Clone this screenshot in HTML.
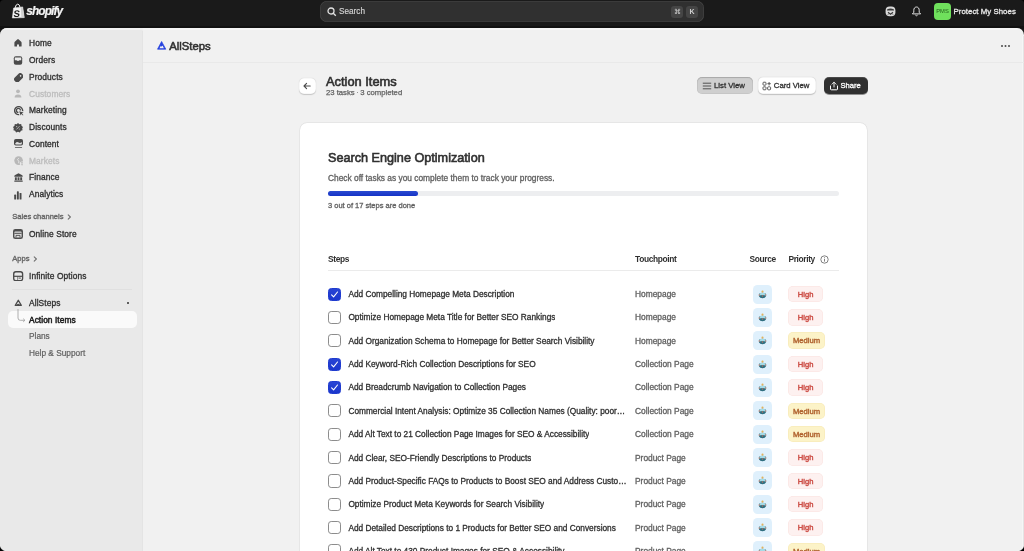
<!DOCTYPE html>
<html><head><meta charset="utf-8">
<style>*{box-sizing:border-box;margin:0;padding:0}
html,body{width:1024px;height:551px;overflow:hidden;background:#000;font-family:"Liberation Sans",sans-serif;color:#303030}
#root{position:absolute;left:0;top:0;width:1024px;height:551px;overflow:hidden;will-change:transform;background:#1a1a1a}
.abs{position:absolute}
#frame{position:absolute;left:0;top:28px;width:1024px;height:540px;background:#f1f1f1;border-radius:7px;overflow:hidden}
#side{position:absolute;left:0;top:0;width:142px;height:540px;background:#e9e9e9;box-shadow:0.5px 0 1px rgba(0,0,0,.05)}
.nav{position:absolute;left:29px;font-size:8.4px;color:#303030;-webkit-text-stroke:0.32px #303030;letter-spacing:0.1px;white-space:nowrap;line-height:10px}
.nav.dis{color:#bdbdbd;-webkit-text-stroke-color:#bdbdbd}
.nav.sub{color:#616161;font-size:8.3px;letter-spacing:0;-webkit-text-stroke:0.2px #616161}
.sec{position:absolute;left:12.3px;font-size:7.55px;color:#666;-webkit-text-stroke:0.35px #666;letter-spacing:0;white-space:nowrap;line-height:10px}
#card{position:absolute;background:#fff;border-radius:7px;box-shadow:0 0 0 0.7px rgba(0,0,0,.05),0 0.6px 1px rgba(0,0,0,.08)}
.cb{position:absolute;width:13.2px;height:13.2px;border-radius:3.2px;border:1.3px solid #8c8c8c;background:#fff}
.cb.on{background:linear-gradient(#2844d4,#1a36cc);border-color:#1f3bcf}
.rt{position:absolute;left:348.4px;font-size:8.3px;color:#303030;white-space:nowrap;line-height:10px;max-width:278.5px;overflow:hidden;text-overflow:ellipsis;-webkit-text-stroke:0.3px #303030}
.tp{position:absolute;left:635px;font-size:8.4px;color:#616161;white-space:nowrap;line-height:10px;-webkit-text-stroke:0.3px #616161}
.src{position:absolute;left:753px;width:19px;height:19px;border-radius:4px;background:#e0f0fc}
.bd{position:absolute;left:788px;height:16.5px;border-radius:5px;font-size:7.6px;line-height:18px;text-align:center;overflow:hidden}
.bd.h{width:35.3px;background:#fdf1f0;color:#cc4c44;-webkit-text-stroke:0.4px #cc4c44;box-shadow:inset 0 0 0 0.5px rgba(230,120,110,.12)}
.bd.m{width:37px;background:#fcf3c8;color:#b0622e;-webkit-text-stroke:0.4px #b0622e;box-shadow:inset 0 0 0 0.5px rgba(220,180,60,.15)}
.th{position:absolute;font-size:8.4px;font-weight:bold;letter-spacing:-0.35px;color:#303030;line-height:10px;white-space:nowrap}
</style></head><body><div id="root">
<!-- TOP BAR -->
<div class="abs" style="left:0;top:0;width:1024px;height:28px;background:#1a1a1a"></div><div class="abs" style="left:0;top:26px;width:1024px;height:3px;background:#121212"></div>
<!-- logo -->
<svg class="abs" style="left:11px;top:3px" width="15" height="16" viewBox="0 0 15 16"><path d="M1.3 15 L2.6 5 L11.7 3.9 L13.3 14.6 Z" fill="#f2f2f2" stroke="#f2f2f2" stroke-width="0.5" stroke-linejoin="round"/><path d="M9.8 4.1 L11.7 3.9 L13.3 14.6 L10.4 14.8 Z" fill="#cfcfcf"/><path d="M4 5.1 Q5 0.9 6.8 1.1 Q8.6 1.3 9 4.4" stroke="#f2f2f2" stroke-width="1" fill="none"/><text x="3.6" y="13.6" font-family="Liberation Sans" font-weight="bold" font-size="9.6" fill="#1a1a1a" transform="skewX(-6)">S</text></svg>
<div class="abs" style="left:26.3px;top:3.6px;font-size:11.9px;font-weight:bold;font-style:italic;color:#f4f4f4;letter-spacing:-0.9px;-webkit-text-stroke:0.2px #f4f4f4;line-height:14px">shopify</div>
<!-- search -->
<div class="abs" style="left:320px;top:1px;width:384px;height:21px;background:#303030;border-radius:7px;box-shadow:inset 0 0 0 0.6px #464646"></div>
<svg class="abs" style="left:327px;top:6.5px" width="10" height="10" viewBox="0 0 10 10"><circle cx="4" cy="4" r="3" stroke="#e3e3e3" stroke-width="1.3" fill="none"/><path d="M6.3 6.3 L8.8 8.8" stroke="#e3e3e3" stroke-width="1.3"/></svg>
<div class="abs" style="left:339px;top:6.5px;font-size:8.2px;color:#d4d4d4;line-height:10px;-webkit-text-stroke:0.15px #d4d4d4">Search</div>
<div class="abs" style="left:671px;top:5.7px;width:12px;height:12px;background:#454545;border-radius:3px;color:#cfcfcf;font-size:7px;text-align:center;line-height:12px">&#8984;</div>
<div class="abs" style="left:686px;top:5.7px;width:12px;height:12px;background:#454545;border-radius:3px;color:#cfcfcf;font-size:7px;text-align:center;line-height:12px;font-weight:bold">K</div>
<!-- right icons -->
<svg class="abs" style="left:884.5px;top:6px" width="11" height="11" viewBox="0 0 11 11"><rect x="0.6" y="0.4" width="9.8" height="9.8" rx="4" fill="#d9d9d9"/><path d="M2 3.6 Q5.5 1.2 9 3.6 L9 4.6 L2 4.6 Z" fill="#3a3a3a"/><path d="M3 6.2 L5.5 8.2 L8 6.2" stroke="#3a3a3a" stroke-width="1.1" fill="none"/><path d="M3 8.6 L4.2 7.4 M8 8.6 L6.8 7.4" stroke="#3a3a3a" stroke-width="0.9"/></svg>
<svg class="abs" style="left:911px;top:6px" width="11" height="11" viewBox="0 0 11 11"><path d="M5.5 1 C3.5 1,2.8 2.7,2.8 4.3 L2.8 6.3 L1.4 7.9 L9.6 7.9 L8.2 6.3 L8.2 4.3 C8.2 2.7,7.5 1,5.5 1Z" stroke="#e3e3e3" stroke-width="1" fill="none" stroke-linejoin="round"/><path d="M4.4 9.1 Q5.5 10.4 6.6 9.1" stroke="#e3e3e3" stroke-width="1" fill="none"/></svg>
<div class="abs" style="left:934px;top:3px;width:17px;height:17px;background:#6fe05c;border-radius:4px;font-size:5.8px;color:#235d1c;text-align:center;line-height:17px">PMS</div>
<div class="abs" style="left:953.5px;top:6.8px;font-size:7.8px;letter-spacing:0.05px;-webkit-text-stroke:0.3px #e8e8e8;color:#e8e8e8;line-height:10px;white-space:nowrap">Protect My Shoes</div>



<div id="frame">
 <div id="side"></div>
 <div class="abs" style="left:0;top:0;width:1024px;height:2px;background:rgba(255,255,255,.4)"></div>
 <div class="abs" style="left:1022px;top:8px;width:1px;height:540px;background:#f6f6f6"></div>
 <div class="abs" style="left:1023px;top:8px;width:1px;height:540px;background:#e4e4e4"></div>
</div>

<!-- SIDEBAR CONTENT -->
<div class="nav" style="top:38.45px">Home</div>
<div class="nav" style="top:55.15px">Orders</div>
<div class="nav" style="top:71.85px">Products</div>
<div class="nav dis" style="top:88.55px">Customers</div>
<div class="nav" style="top:105.25px">Marketing</div>
<div class="nav" style="top:122.05px">Discounts</div>
<div class="nav" style="top:138.85px">Content</div>
<div class="nav dis" style="top:155.65px">Markets</div>
<div class="nav" style="top:172.45px">Finance</div>
<div class="nav" style="top:189.15px">Analytics</div>
<div class="sec" style="top:212px">Sales channels</div><svg class="abs" style="left:67px;top:214px" width="5" height="6" viewBox="0 0 5 6"><path d="M1.2 0.9 L3.4 3 L1.2 5.1" stroke="#6e6e6e" stroke-width="1.05" fill="none" stroke-linecap="round" stroke-linejoin="round"/></svg>
<div class="nav" style="top:228.85px">Online Store</div>
<div class="sec" style="top:254px">Apps</div><svg class="abs" style="left:33.2px;top:256px" width="5" height="6" viewBox="0 0 5 6"><path d="M1.2 0.9 L3.4 3 L1.2 5.1" stroke="#6e6e6e" stroke-width="1.05" fill="none" stroke-linecap="round" stroke-linejoin="round"/></svg>
<div class="nav" style="top:270.85px">Infinite Options</div>
<div class="abs" style="left:12px;top:289px;width:120px;height:1px;background:#e0e0e0"></div>
<div class="nav" style="top:297.85px">AllSteps</div>
<div class="abs" style="left:127px;top:302px;width:2px;height:2px;border-radius:1px;background:#303030"></div>
<div class="abs" style="left:7.5px;top:311px;width:129px;height:17px;background:#fafafa;border-radius:5px"></div>
<div class="nav" style="top:314.55px;color:#1e1e1e;letter-spacing:0.05px;-webkit-text-stroke:0.5px #1e1e1e">Action Items</div>
<div class="nav sub" style="top:331.15px">Plans</div>
<div class="nav sub" style="top:347.85px">Help &amp; Support</div>
<!-- sidebar icons -->
<svg class="abs" style="left:14.1px;top:39.4px" width="8" height="8" viewBox="0 0 8 8"><path d="M3.5 0.35 Q4 0 4.5 0.35 L7.2 2.7 Q7.6 3.1 7.6 3.7 V6.9 Q7.6 7.5 7 7.5 H5 V6 Q5 5.2 4 5.2 Q3 5.2 3 6 V7.5 H1 Q0.4 7.5 0.4 6.9 V3.7 Q0.4 3.1 0.8 2.7 Z" fill="#4a4a4a"/></svg>
<svg class="abs" style="left:13px;top:55.5px" width="10" height="9" viewBox="0 0 10 9"><rect x="0.8" y="0.3" width="8.4" height="8.4" rx="2" fill="#4a4a4a"/><path d="M1.8 1.5 H8.2 V4.2 H6.5 Q5 5.8 3.5 4.2 H1.8 Z" fill="#e9e9e9"/></svg>
<svg class="abs" style="left:13.5px;top:72.5px" width="9.5" height="9.5" viewBox="0 0 9.5 9.5"><g transform="translate(4.75 4.75) rotate(45)"><rect x="-2.9" y="-5" width="5.8" height="10" rx="2" fill="#4a4a4a"/><circle cx="0" cy="-2.6" r="0.8" fill="#e9e9e9"/></g></svg>
<svg class="abs" style="left:14px;top:89.3px" width="8" height="9" viewBox="0 0 8 9"><circle cx="4" cy="2.3" r="1.9" fill="#b8b8b8"/><path d="M0.6 8.6 Q0.6 5.4 4 5.4 Q7.4 5.4 7.4 8.6 Z" fill="#b8b8b8"/></svg>
<svg class="abs" style="left:13.5px;top:105.8px" width="10" height="10" viewBox="0 0 10 10"><path d="M8.6 5.2 A4 4 0 1 0 5.2 8.6" stroke="#4a4a4a" stroke-width="1.4" fill="none"/><path d="M6.4 4.4 A2 2 0 1 0 4.4 6.4" stroke="#4a4a4a" stroke-width="1.3" fill="none"/><path d="M5.2 5.2 L9.6 6.6 L7.9 7.4 L9.4 8.9 L8.9 9.4 L7.4 7.9 L6.6 9.6 Z" fill="#4a4a4a"/></svg>
<svg class="abs" style="left:13.3px;top:122.6px" width="10" height="10" viewBox="0 0 10 10"><path d="M5 0 L6.4 1.2 L8.2 1 L8.5 2.8 L10 3.9 L9.2 5.5 L9.6 7.3 L7.9 7.8 L6.9 9.4 L5 8.8 L3.1 9.4 L2.1 7.8 L0.4 7.3 L0.8 5.5 L0 3.9 L1.5 2.8 L1.8 1 L3.6 1.2 Z" fill="#4a4a4a"/><path d="M3.5 6.4 L6.5 3.2" stroke="#c8c8c8" stroke-width="0.8"/><circle cx="3.7" cy="3.6" r="0.55" fill="#c8c8c8"/><circle cx="6.3" cy="6" r="0.55" fill="#c8c8c8"/></svg>
<svg class="abs" style="left:13.7px;top:139.3px" width="10" height="10" viewBox="0 0 10 10"><rect x="0" y="0" width="9" height="6.6" rx="1.8" fill="#4a4a4a"/><path d="M1.2 4.5 Q3 2.2 4.6 3.6 Q6 4.8 7.8 3 V4.8 Q7.8 5.5 7 5.5 H2 Q1.2 5.5 1.2 4.8 Z" fill="#e0e0e0"/><rect x="0.9" y="7.9" width="7.2" height="0.9" rx="0.4" fill="#4a4a4a"/></svg>
<svg class="abs" style="left:13.5px;top:156.3px" width="10" height="10" viewBox="0 0 10 10"><circle cx="4.6" cy="4.6" r="4.3" fill="#b8b8b8"/><path d="M4.8 2.2 Q2.6 3.4 4.4 4.8 Q5.4 5.6 4.6 7.2" stroke="#ebebeb" stroke-width="0.9" fill="none"/><circle cx="8" cy="7.6" r="2.2" fill="#e9e9e9"/><path d="M8 6 V9.2 M7 6.8 Q8 6.2 8.8 6.8 M7.2 8.6 Q8 9.2 9 8.6" stroke="#b8b8b8" stroke-width="0.7" fill="none"/></svg>
<svg class="abs" style="left:13.8px;top:173.2px" width="10" height="9" viewBox="0 0 10 9"><path d="M0.3 3.3 Q0.3 2.5 1.2 2 L4.5 0.3 L7.8 2 Q8.7 2.5 8.7 3.3 V3.8 H0.3 Z" fill="#4a4a4a"/><rect x="0.9" y="4.3" width="1.9" height="2.9" fill="#4a4a4a"/><rect x="3.55" y="4.3" width="1.9" height="2.9" fill="#4a4a4a"/><rect x="6.2" y="4.3" width="1.9" height="2.9" fill="#4a4a4a"/><rect x="0.3" y="7.5" width="8.4" height="1.3" rx="0.3" fill="#4a4a4a"/></svg>
<svg class="abs" style="left:13.8px;top:190.8px" width="10" height="9" viewBox="0 0 10 9"><rect x="0.2" y="3.6" width="1.9" height="5" rx="0.6" fill="#4a4a4a"/><rect x="2.9" y="0.3" width="1.9" height="8.3" rx="0.6" fill="#4a4a4a"/><rect x="5.6" y="2" width="1.9" height="6.6" rx="0.6" fill="#4a4a4a"/></svg>
<svg class="abs" style="left:12.8px;top:228.7px" width="10" height="10" viewBox="0 0 10 10"><rect x="0" y="0" width="10" height="10" rx="2.3" fill="#4e4e4e"/><rect x="1.4" y="2.6" width="7.2" height="6" rx="0.8" fill="#dcdcdc"/><rect x="1.4" y="3.8" width="7.2" height="1" fill="#4e4e4e"/><path d="M3 8.6 V6.4 H7 V8.6" stroke="#4e4e4e" stroke-width="0.9" fill="none"/></svg>
<svg class="abs" style="left:13px;top:270.5px" width="10.5" height="10.5" viewBox="0 0 10.5 10.5"><rect x="0.7" y="0.7" width="8.9" height="8.9" rx="2.2" stroke="#4a4a4a" stroke-width="1.35" fill="none"/><path d="M0.8 5.3 H9.5" stroke="#4a4a4a" stroke-width="1.2"/><path d="M5.6 7.1 H7.9" stroke="#4a4a4a" stroke-width="0.9"/><path d="M4.6 5.5 V9" stroke="#4a4a4a" stroke-width="0.6"/></svg>
<svg class="abs" style="left:13.5px;top:298.8px" width="10" height="8" viewBox="0 0 10 8"><path d="M1.3 6.4 L4.3 1.2 L7.3 6.4 Z" fill="none" stroke="#4a4a4a" stroke-width="1.3" stroke-linejoin="round"/><path d="M2.6 6 Q4.3 3.6 6 6 Z" fill="#4a4a4a"/></svg>
<svg class="abs" style="left:15.8px;top:308px" width="11" height="16" viewBox="0 0 11 16"><path d="M2 1 V10 Q2 12.3 4.3 12.3 H8.8" stroke="#a0a0a0" stroke-width="0.85" fill="none"/><path d="M7.2 10.7 L8.9 12.3 L7.2 13.9" stroke="#a0a0a0" stroke-width="0.85" fill="none"/></svg>



<!-- MAIN HEADER -->
<div class="abs" style="left:143px;top:61.5px;width:881px;height:1px;background:#e9e9e9"></div>
<svg class="abs" style="left:156.2px;top:39.9px" width="11" height="10" viewBox="0 0 11 10"><path d="M1.5 9.2 L5.6 1.5 L9.8 9.2 Z" fill="#2542df" stroke="#2542df" stroke-width="0.7" stroke-linejoin="round"/><path d="M3.4 8.2 L4.9 5.8 L5.6 6.8 L6.5 5.5 L7.9 8.2 Z" fill="#f1f1f1"/></svg>
<div class="abs" style="left:169.2px;top:39.5px;font-size:11.3px;color:#303030;-webkit-text-stroke:0.55px #303030;line-height:13px;white-space:nowrap">AllSteps</div>
<div class="abs" style="left:1001.3px;top:45px;width:2px;height:2px;border-radius:1px;background:#4a4a4a;box-shadow:3.5px 0 0 #4a4a4a,7px 0 0 #4a4a4a"></div>
<!-- page title -->
<div class="abs" style="left:299px;top:77.7px;width:16.5px;height:16.5px;border-radius:5px;background:#fff;box-shadow:0 0.5px 1px rgba(0,0,0,.18),inset 0 0 0 0.5px rgba(0,0,0,.06)"></div>
<svg class="abs" style="left:301.8px;top:80.9px" width="10" height="10" viewBox="0 0 10 10"><path d="M8.2 5 H2 M4.6 2.4 L2 5 L4.6 7.6" stroke="#4a4a4a" stroke-width="1.1" fill="none" stroke-linecap="round" stroke-linejoin="round"/></svg>
<div class="abs" style="left:326px;top:73.9px;font-size:12.85px;color:#303030;-webkit-text-stroke:0.6px #303030;line-height:15px;white-space:nowrap">Action Items</div>
<div class="abs" style="left:326px;top:88px;font-size:7.7px;color:#616161;-webkit-text-stroke:0.25px #616161;line-height:10px;white-space:nowrap">23 tasks <span style="display:inline-block;width:1.4px;height:1.4px;border-radius:50%;background:#777;vertical-align:1.7px"></span> 3 completed</div>
<!-- buttons -->
<div class="abs" style="left:697px;top:77.2px;width:56px;height:17px;border-radius:5px;background:#cfcfcf;box-shadow:inset 0 1px 1px rgba(0,0,0,.15),inset 0 0 0 0.5px rgba(0,0,0,.08)"></div>
<svg class="abs" style="left:702px;top:81px" width="10" height="10" viewBox="0 0 10 10"><path d="M1.2 2.2 H8.8 M1.2 5 H8.8 M1.2 7.8 H8.8" stroke="#4a4a4a" stroke-width="0.95" stroke-linecap="round"/></svg>
<div class="abs" style="left:714px;top:81px;font-size:7.75px;color:#303030;-webkit-text-stroke:0.3px #303030;line-height:10px;white-space:nowrap">List View</div>
<div class="abs" style="left:757.5px;top:77.2px;width:58.5px;height:17px;border-radius:5px;background:#fff;box-shadow:0 0.5px 1px rgba(0,0,0,.2),inset 0 0 0 0.5px rgba(0,0,0,.08)"></div>
<svg class="abs" style="left:762px;top:81px" width="10" height="10" viewBox="0 0 10 10"><rect x="1" y="1.2" width="3" height="3" rx="0.8" stroke="#4a4a4a" stroke-width="0.9" fill="none"/><rect x="1" y="5.8" width="3" height="3" rx="0.8" stroke="#4a4a4a" stroke-width="0.9" fill="none"/><rect x="5.6" y="5.8" width="3" height="3" rx="0.8" stroke="#4a4a4a" stroke-width="0.9" fill="none"/><path d="M7.1 1 V4.4 M5.4 2.7 H8.8" stroke="#4a4a4a" stroke-width="0.9"/></svg>
<div class="abs" style="left:773.8px;top:81px;font-size:7.75px;color:#303030;-webkit-text-stroke:0.3px #303030;line-height:10px;white-space:nowrap">Card View</div>
<div class="abs" style="left:824px;top:77.2px;width:44px;height:17px;border-radius:5px;background:#303030;box-shadow:0 1px 0 rgba(0,0,0,.4),inset 0 1px 0 rgba(255,255,255,.12)"></div>
<svg class="abs" style="left:829px;top:81px" width="10" height="10" viewBox="0 0 10 10"><path d="M5 6 V1.3 M3 3.2 L5 1.2 L7 3.2" stroke="#fff" stroke-width="0.9" fill="none" stroke-linecap="round" stroke-linejoin="round"/><path d="M1.5 5 V8 Q1.5 8.8 2.3 8.8 H7.7 Q8.5 8.8 8.5 8 V5" stroke="#fff" stroke-width="1" fill="none" stroke-linecap="round"/></svg>
<div class="abs" style="left:840.5px;top:81px;font-size:7.6px;color:#fff;-webkit-text-stroke:0.3px #fff;line-height:10px;white-space:nowrap">Share</div>



<!-- CARD -->
<div id="card" style="left:299.6px;top:123px;width:567.4px;height:440px"></div>
<div class="abs" style="left:328px;top:151px;font-size:12.65px;color:#303030;-webkit-text-stroke:0.6px #303030;line-height:15px;white-space:nowrap">Search Engine Optimization</div>
<div class="abs" style="left:328px;top:173px;font-size:8.37px;color:#616161;-webkit-text-stroke:0.3px #616161;line-height:10px;white-space:nowrap">Check off tasks as you complete them to track your progress.</div>
<div class="abs" style="left:328px;top:191px;width:511px;height:5px;border-radius:2.5px;background:#edeef0"></div>
<div class="abs" style="left:328px;top:191px;width:90px;height:5px;border-radius:2.5px;background:linear-gradient(#2a4ad0,#1533c6)"></div>
<div class="abs" style="left:328px;top:201px;font-size:7.5px;color:#616161;-webkit-text-stroke:0.3px #616161;line-height:10px;white-space:nowrap">3 out of 17 steps are done</div>
<div class="th" style="left:328px;top:253.75px">Steps</div>
<div class="th" style="left:635px;top:253.75px">Touchpoint</div>
<div class="th" style="left:749.5px;top:253.75px">Source</div>
<div class="th" style="left:788.4px;top:253.75px">Priority</div>
<svg class="abs" style="left:819.5px;top:254.5px" width="9" height="9" viewBox="0 0 9 9"><circle cx="4.5" cy="4.5" r="3.7" stroke="#616161" stroke-width="0.8" fill="none"/><path d="M4.5 4 V6.6" stroke="#616161" stroke-width="0.8"/><circle cx="4.5" cy="2.7" r="0.5" fill="#616161"/></svg>
<div class="abs" style="left:328px;top:269.5px;width:511px;height:1px;background:#ebebeb"></div>
<div class="cb on" style="left:328px;top:287.50px"></div><svg class="abs" style="left:328px;top:287.50px" width="13" height="13" viewBox="0 0 13 13"><path d="M3.6 6.8 L5.6 8.8 L9.5 4" stroke="#fff" stroke-width="1.1" fill="none" stroke-linecap="round" stroke-linejoin="round"/></svg><div class="rt" style="top:289.00px">Add Compelling Homepage Meta Description</div><div class="tp" style="top:289.00px">Homepage</div><svg class="abs" style="left:753px;top:284.50px" width="19" height="19" viewBox="0 0 19 19"><rect x="0" y="0" width="19" height="19" rx="4.5" fill="#dff0fc"/>
<path d="M6 8.6 Q9.5 6.9 13 8.6 L12.8 11.6 Q12.3 13.3 9.5 13.3 Q6.7 13.3 6.2 11.6 Z" fill="#2f6f80"/>
<path d="M6.1 8.6 Q9.5 7 12.9 8.6 L12.8 10.5 Q9.5 9.6 6.2 10.5 Z" fill="#a6dbe7"/>
<circle cx="6.3" cy="10" r="0.8" fill="#b07a6e"/>
<circle cx="12.7" cy="10" r="0.8" fill="#b07a6e"/>
<circle cx="9.5" cy="10.9" r="0.75" fill="#c46f5c"/>
<circle cx="9.5" cy="6.6" r="1.05" fill="#e2b25a"/>
</svg><div class="bd h" style="top:285.75px">High</div>
<div class="cb" style="left:328px;top:310.86px"></div><div class="rt" style="top:312.36px">Optimize Homepage Meta Title for Better SEO Rankings</div><div class="tp" style="top:312.36px">Homepage</div><svg class="abs" style="left:753px;top:307.86px" width="19" height="19" viewBox="0 0 19 19"><rect x="0" y="0" width="19" height="19" rx="4.5" fill="#dff0fc"/>
<path d="M6 8.6 Q9.5 6.9 13 8.6 L12.8 11.6 Q12.3 13.3 9.5 13.3 Q6.7 13.3 6.2 11.6 Z" fill="#2f6f80"/>
<path d="M6.1 8.6 Q9.5 7 12.9 8.6 L12.8 10.5 Q9.5 9.6 6.2 10.5 Z" fill="#a6dbe7"/>
<circle cx="6.3" cy="10" r="0.8" fill="#b07a6e"/>
<circle cx="12.7" cy="10" r="0.8" fill="#b07a6e"/>
<circle cx="9.5" cy="10.9" r="0.75" fill="#c46f5c"/>
<circle cx="9.5" cy="6.6" r="1.05" fill="#e2b25a"/>
</svg><div class="bd h" style="top:309.11px">High</div>
<div class="cb" style="left:328px;top:334.22px"></div><div class="rt" style="top:335.72px">Add Organization Schema to Homepage for Better Search Visibility</div><div class="tp" style="top:335.72px">Homepage</div><svg class="abs" style="left:753px;top:331.22px" width="19" height="19" viewBox="0 0 19 19"><rect x="0" y="0" width="19" height="19" rx="4.5" fill="#dff0fc"/>
<path d="M6 8.6 Q9.5 6.9 13 8.6 L12.8 11.6 Q12.3 13.3 9.5 13.3 Q6.7 13.3 6.2 11.6 Z" fill="#2f6f80"/>
<path d="M6.1 8.6 Q9.5 7 12.9 8.6 L12.8 10.5 Q9.5 9.6 6.2 10.5 Z" fill="#a6dbe7"/>
<circle cx="6.3" cy="10" r="0.8" fill="#b07a6e"/>
<circle cx="12.7" cy="10" r="0.8" fill="#b07a6e"/>
<circle cx="9.5" cy="10.9" r="0.75" fill="#c46f5c"/>
<circle cx="9.5" cy="6.6" r="1.05" fill="#e2b25a"/>
</svg><div class="bd m" style="top:332.47px">Medium</div>
<div class="cb on" style="left:328px;top:357.58px"></div><svg class="abs" style="left:328px;top:357.58px" width="13" height="13" viewBox="0 0 13 13"><path d="M3.6 6.8 L5.6 8.8 L9.5 4" stroke="#fff" stroke-width="1.1" fill="none" stroke-linecap="round" stroke-linejoin="round"/></svg><div class="rt" style="top:359.08px">Add Keyword-Rich Collection Descriptions for SEO</div><div class="tp" style="top:359.08px">Collection Page</div><svg class="abs" style="left:753px;top:354.58px" width="19" height="19" viewBox="0 0 19 19"><rect x="0" y="0" width="19" height="19" rx="4.5" fill="#dff0fc"/>
<path d="M6 8.6 Q9.5 6.9 13 8.6 L12.8 11.6 Q12.3 13.3 9.5 13.3 Q6.7 13.3 6.2 11.6 Z" fill="#2f6f80"/>
<path d="M6.1 8.6 Q9.5 7 12.9 8.6 L12.8 10.5 Q9.5 9.6 6.2 10.5 Z" fill="#a6dbe7"/>
<circle cx="6.3" cy="10" r="0.8" fill="#b07a6e"/>
<circle cx="12.7" cy="10" r="0.8" fill="#b07a6e"/>
<circle cx="9.5" cy="10.9" r="0.75" fill="#c46f5c"/>
<circle cx="9.5" cy="6.6" r="1.05" fill="#e2b25a"/>
</svg><div class="bd h" style="top:355.83px">High</div>
<div class="cb on" style="left:328px;top:380.94px"></div><svg class="abs" style="left:328px;top:380.94px" width="13" height="13" viewBox="0 0 13 13"><path d="M3.6 6.8 L5.6 8.8 L9.5 4" stroke="#fff" stroke-width="1.1" fill="none" stroke-linecap="round" stroke-linejoin="round"/></svg><div class="rt" style="top:382.44px">Add Breadcrumb Navigation to Collection Pages</div><div class="tp" style="top:382.44px">Collection Page</div><svg class="abs" style="left:753px;top:377.94px" width="19" height="19" viewBox="0 0 19 19"><rect x="0" y="0" width="19" height="19" rx="4.5" fill="#dff0fc"/>
<path d="M6 8.6 Q9.5 6.9 13 8.6 L12.8 11.6 Q12.3 13.3 9.5 13.3 Q6.7 13.3 6.2 11.6 Z" fill="#2f6f80"/>
<path d="M6.1 8.6 Q9.5 7 12.9 8.6 L12.8 10.5 Q9.5 9.6 6.2 10.5 Z" fill="#a6dbe7"/>
<circle cx="6.3" cy="10" r="0.8" fill="#b07a6e"/>
<circle cx="12.7" cy="10" r="0.8" fill="#b07a6e"/>
<circle cx="9.5" cy="10.9" r="0.75" fill="#c46f5c"/>
<circle cx="9.5" cy="6.6" r="1.05" fill="#e2b25a"/>
</svg><div class="bd h" style="top:379.19px">High</div>
<div class="cb" style="left:328px;top:404.30px"></div><div class="rt" style="top:405.80px">Commercial Intent Analysis: Optimize 35 Collection Names (Quality: poor quality names)</div><div class="tp" style="top:405.80px">Collection Page</div><svg class="abs" style="left:753px;top:401.30px" width="19" height="19" viewBox="0 0 19 19"><rect x="0" y="0" width="19" height="19" rx="4.5" fill="#dff0fc"/>
<path d="M6 8.6 Q9.5 6.9 13 8.6 L12.8 11.6 Q12.3 13.3 9.5 13.3 Q6.7 13.3 6.2 11.6 Z" fill="#2f6f80"/>
<path d="M6.1 8.6 Q9.5 7 12.9 8.6 L12.8 10.5 Q9.5 9.6 6.2 10.5 Z" fill="#a6dbe7"/>
<circle cx="6.3" cy="10" r="0.8" fill="#b07a6e"/>
<circle cx="12.7" cy="10" r="0.8" fill="#b07a6e"/>
<circle cx="9.5" cy="10.9" r="0.75" fill="#c46f5c"/>
<circle cx="9.5" cy="6.6" r="1.05" fill="#e2b25a"/>
</svg><div class="bd m" style="top:402.55px">Medium</div>
<div class="cb" style="left:328px;top:427.66px"></div><div class="rt" style="top:429.16px">Add Alt Text to 21 Collection Page Images for SEO &amp; Accessibility</div><div class="tp" style="top:429.16px">Collection Page</div><svg class="abs" style="left:753px;top:424.66px" width="19" height="19" viewBox="0 0 19 19"><rect x="0" y="0" width="19" height="19" rx="4.5" fill="#dff0fc"/>
<path d="M6 8.6 Q9.5 6.9 13 8.6 L12.8 11.6 Q12.3 13.3 9.5 13.3 Q6.7 13.3 6.2 11.6 Z" fill="#2f6f80"/>
<path d="M6.1 8.6 Q9.5 7 12.9 8.6 L12.8 10.5 Q9.5 9.6 6.2 10.5 Z" fill="#a6dbe7"/>
<circle cx="6.3" cy="10" r="0.8" fill="#b07a6e"/>
<circle cx="12.7" cy="10" r="0.8" fill="#b07a6e"/>
<circle cx="9.5" cy="10.9" r="0.75" fill="#c46f5c"/>
<circle cx="9.5" cy="6.6" r="1.05" fill="#e2b25a"/>
</svg><div class="bd m" style="top:425.91px">Medium</div>
<div class="cb" style="left:328px;top:451.02px"></div><div class="rt" style="top:452.52px">Add Clear, SEO-Friendly Descriptions to Products</div><div class="tp" style="top:452.52px">Product Page</div><svg class="abs" style="left:753px;top:448.02px" width="19" height="19" viewBox="0 0 19 19"><rect x="0" y="0" width="19" height="19" rx="4.5" fill="#dff0fc"/>
<path d="M6 8.6 Q9.5 6.9 13 8.6 L12.8 11.6 Q12.3 13.3 9.5 13.3 Q6.7 13.3 6.2 11.6 Z" fill="#2f6f80"/>
<path d="M6.1 8.6 Q9.5 7 12.9 8.6 L12.8 10.5 Q9.5 9.6 6.2 10.5 Z" fill="#a6dbe7"/>
<circle cx="6.3" cy="10" r="0.8" fill="#b07a6e"/>
<circle cx="12.7" cy="10" r="0.8" fill="#b07a6e"/>
<circle cx="9.5" cy="10.9" r="0.75" fill="#c46f5c"/>
<circle cx="9.5" cy="6.6" r="1.05" fill="#e2b25a"/>
</svg><div class="bd h" style="top:449.27px">High</div>
<div class="cb" style="left:328px;top:474.38px"></div><div class="rt" style="top:475.88px">Add Product-Specific FAQs to Products to Boost SEO and Address Customer Questions</div><div class="tp" style="top:475.88px">Product Page</div><svg class="abs" style="left:753px;top:471.38px" width="19" height="19" viewBox="0 0 19 19"><rect x="0" y="0" width="19" height="19" rx="4.5" fill="#dff0fc"/>
<path d="M6 8.6 Q9.5 6.9 13 8.6 L12.8 11.6 Q12.3 13.3 9.5 13.3 Q6.7 13.3 6.2 11.6 Z" fill="#2f6f80"/>
<path d="M6.1 8.6 Q9.5 7 12.9 8.6 L12.8 10.5 Q9.5 9.6 6.2 10.5 Z" fill="#a6dbe7"/>
<circle cx="6.3" cy="10" r="0.8" fill="#b07a6e"/>
<circle cx="12.7" cy="10" r="0.8" fill="#b07a6e"/>
<circle cx="9.5" cy="10.9" r="0.75" fill="#c46f5c"/>
<circle cx="9.5" cy="6.6" r="1.05" fill="#e2b25a"/>
</svg><div class="bd h" style="top:472.63px">High</div>
<div class="cb" style="left:328px;top:497.74px"></div><div class="rt" style="top:499.24px">Optimize Product Meta Keywords for Search Visibility</div><div class="tp" style="top:499.24px">Product Page</div><svg class="abs" style="left:753px;top:494.74px" width="19" height="19" viewBox="0 0 19 19"><rect x="0" y="0" width="19" height="19" rx="4.5" fill="#dff0fc"/>
<path d="M6 8.6 Q9.5 6.9 13 8.6 L12.8 11.6 Q12.3 13.3 9.5 13.3 Q6.7 13.3 6.2 11.6 Z" fill="#2f6f80"/>
<path d="M6.1 8.6 Q9.5 7 12.9 8.6 L12.8 10.5 Q9.5 9.6 6.2 10.5 Z" fill="#a6dbe7"/>
<circle cx="6.3" cy="10" r="0.8" fill="#b07a6e"/>
<circle cx="12.7" cy="10" r="0.8" fill="#b07a6e"/>
<circle cx="9.5" cy="10.9" r="0.75" fill="#c46f5c"/>
<circle cx="9.5" cy="6.6" r="1.05" fill="#e2b25a"/>
</svg><div class="bd h" style="top:495.99px">High</div>
<div class="cb" style="left:328px;top:521.10px"></div><div class="rt" style="top:522.60px">Add Detailed Descriptions to 1 Products for Better SEO and Conversions</div><div class="tp" style="top:522.60px">Product Page</div><svg class="abs" style="left:753px;top:518.10px" width="19" height="19" viewBox="0 0 19 19"><rect x="0" y="0" width="19" height="19" rx="4.5" fill="#dff0fc"/>
<path d="M6 8.6 Q9.5 6.9 13 8.6 L12.8 11.6 Q12.3 13.3 9.5 13.3 Q6.7 13.3 6.2 11.6 Z" fill="#2f6f80"/>
<path d="M6.1 8.6 Q9.5 7 12.9 8.6 L12.8 10.5 Q9.5 9.6 6.2 10.5 Z" fill="#a6dbe7"/>
<circle cx="6.3" cy="10" r="0.8" fill="#b07a6e"/>
<circle cx="12.7" cy="10" r="0.8" fill="#b07a6e"/>
<circle cx="9.5" cy="10.9" r="0.75" fill="#c46f5c"/>
<circle cx="9.5" cy="6.6" r="1.05" fill="#e2b25a"/>
</svg><div class="bd h" style="top:519.35px">High</div>
<div class="cb" style="left:328px;top:544.46px"></div><div class="rt" style="top:545.96px">Add Alt Text to 430 Product Images for SEO &amp; Accessibility</div><div class="tp" style="top:545.96px">Product Page</div><svg class="abs" style="left:753px;top:541.46px" width="19" height="19" viewBox="0 0 19 19"><rect x="0" y="0" width="19" height="19" rx="4.5" fill="#dff0fc"/>
<path d="M6 8.6 Q9.5 6.9 13 8.6 L12.8 11.6 Q12.3 13.3 9.5 13.3 Q6.7 13.3 6.2 11.6 Z" fill="#2f6f80"/>
<path d="M6.1 8.6 Q9.5 7 12.9 8.6 L12.8 10.5 Q9.5 9.6 6.2 10.5 Z" fill="#a6dbe7"/>
<circle cx="6.3" cy="10" r="0.8" fill="#b07a6e"/>
<circle cx="12.7" cy="10" r="0.8" fill="#b07a6e"/>
<circle cx="9.5" cy="10.9" r="0.75" fill="#c46f5c"/>
<circle cx="9.5" cy="6.6" r="1.05" fill="#e2b25a"/>
</svg><div class="bd m" style="top:542.71px">Medium</div>

<svg class="abs" style="left:0;top:0" width="1024" height="551" viewBox="0 0 1024 551">
<path d="M0 0 H3.5 Q0 0 0 3.5 Z" fill="#000"/>
<path d="M1024 0 H1020.5 Q1024 0 1024 3.5 Z" fill="#000"/>
<path d="M0 546.3 Q1.2 549.8 4.7 551 H0 Z" fill="#000"/>
<path d="M1024 546.3 Q1022.8 549.8 1019.3 551 H1024 Z" fill="#000"/>
<path d="M0 546.3 Q1.2 549.8 4.7 551" stroke="rgba(255,255,255,.7)" stroke-width="0.6" fill="none"/>
<path d="M1024 546.3 Q1022.8 549.8 1019.3 551" stroke="rgba(255,255,255,.7)" stroke-width="0.6" fill="none"/>
</svg>

</div></body></html>
